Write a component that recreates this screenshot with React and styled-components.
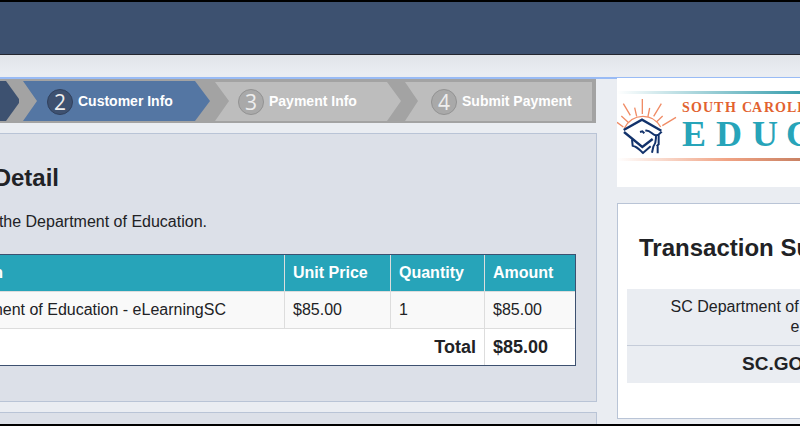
import React from "react";
import styled, { createGlobalStyle } from "styled-components";

const GlobalStyle = createGlobalStyle`
  * { box-sizing: border-box; }
  html, body { height: 100%; }
  body {
    margin: 0;
    background: #eaedf2;
    color: #212225;
    font-family: "Liberation Sans", Arial, sans-serif;
    font-size: 16px;
    line-height: 20px;
    overflow: hidden;
  }
  #root { height: 100%; }
`;

const Page = styled.div`
  height: 100vh;
  display: flex;
  flex-direction: column;
  overflow: hidden;
  border-top: 2px solid #000;
  border-bottom: 2px solid #000;
`;

const Header = styled.header`
  flex: 0 0 53px;
  background: #3d5170;
  border-bottom: 1px solid #24262f;
`;

const Body = styled.div`
  flex: 1;
  min-height: 0;
  padding-top: 22px;
  background: linear-gradient(#e1e4e9, #eaedf2 18px);
`;

const Main = styled.main`
  display: grid;
  grid-template-columns: minmax(0, 1fr) 183px;
  column-gap: 20px;
  border-top: 1px solid #99bbf5;
`;

const Column = styled.div`
  min-width: 0;
`;

const Accent = styled.div`
  height: 1px;
  margin-right: -20px;
  background: #99bbf5;
`;

const Steps = styled.ol`
  display: grid;
  grid-template-columns: 19px repeat(3, minmax(0, 1fr));
  column-gap: 4px;
  height: 44px;
  margin: 0 1px 10px 0;
  padding: 2px 4px 2px 0;
  list-style: none;
  background: #a3a3a3;
`;

const shapes = {
  done: "polygon(0 0, 6px 0, 100% 45%, 100% 55%, 6px 100%, 0 100%)",
  current: "polygon(0 0, calc(100% - 15px) 0, 100% 50%, calc(100% - 15px) 100%, 0 100%, 14px 50%)",
  next: "polygon(1px 1px, calc(100% - 14px) 1px, 100% 50%, calc(100% - 14px) 100%, 1px 100%, 15px 50%)",
  last: "polygon(0 1px, 100% 1px, 100% 100%, 0 100%, 13px 50%)",
};

const fills = { done: "#3d5170", current: "#5476a3", next: "#bdbdbd", last: "#bdbdbd" };

const insets = { done: 0, current: 24, next: 24, last: 26 };

const Step = styled.li`
  display: flex;
  align-items: center;
  gap: 5px;
  padding-left: ${(p) => insets[p.$kind]}px;
  overflow: hidden;
  color: #fff;
  font-size: 14px;
  font-weight: bold;
  white-space: nowrap;
  background: ${(p) => fills[p.$kind]};
  clip-path: ${(p) => shapes[p.$kind]};
`;

const StepNumber = styled.span`
  flex: none;
  width: 26px;
  height: 26px;
  margin-top: 2px;
  border: 1px solid ${(p) => (p.$active ? "#31415d" : "#929292")};
  border-radius: 50%;
  background: ${(p) => (p.$active ? "#3e5170" : "#a9a9a9")};
  color: #eee;
  font: 21px/25px "Open Sans", sans-serif;
  text-align: center;
`;

const Panel = styled.section`
  margin-bottom: 10px;
  padding: 32px 20px 35px 0;
  border: 1px solid #b9c4d6;
  border-left: 0;
  background: #dce0e8;
`;

const Title = styled.h2`
  margin: 0;
  font-size: 24px;
  line-height: 24px;
  white-space: nowrap;
`;

/* Text that runs out past the left edge of the window and ends at a set width. */
const Tail = styled.span`
  display: flex;
  justify-content: flex-end;
  width: ${(p) => p.$width}px;
  white-space: nowrap;
`;

const Intro = styled.p`
  margin: 22px 0;
`;

const Table = styled.table`
  width: 100%;
  table-layout: fixed;
  border-collapse: separate;
  border-spacing: 0;
  border: 1px solid #3d5170;
  border-left: 0;
`;

const Col = styled.col`
  width: ${(p) => p.$width};
`;

const Row = styled.tr`
  background: ${(p) => p.$fill};
  color: ${(p) => p.$ink || "inherit"};
  font-size: ${(p) => (p.$large ? 18 : 16)}px;
  font-weight: ${(p) => (p.$large ? "bold" : "normal")};
  & > * {
    height: ${(p) => (p.$large ? 36 : 37)}px;
    padding: 0 8px;
    text-align: left;
    border-right: 1px solid #ddd;
    border-bottom: ${(p) => (p.$large ? 0 : "1px solid #ddd")};
  }
  & > :first-child { padding-left: 0; }
  & > :last-child { border-right: 0; }
  & > th[scope="row"] { text-align: right; }
`;

const LogoCard = styled.div`
  height: 109px;
  margin-bottom: 16px;
  overflow: hidden;
  background: #fff;
`;

const Logo = styled.svg`
  display: block;
  width: 183px;
  height: 109px;
`;

const Summary = styled.aside`
  width: 300px;
  padding: 32px 9px 35px 9px;
  border: 1px solid #b9c4d6;
  background: #fff;
`;

const SummaryTitle = styled(Title)`
  margin: 0 0 29px 12px;
`;

const SummaryList = styled.div`
  background: #eaedf2;
`;

const SummaryRow = styled.div`
  padding: ${(p) => (p.$total ? "8px 13px 9px 115px" : "8px 23px 8px 8px")};
  text-align: ${(p) => (p.$total ? "left" : "right")};
  border-top: ${(p) => (p.$total ? "1px solid #c5ccd9" : 0)};
  font-size: ${(p) => (p.$total ? 19 : 16)}px;
  font-weight: ${(p) => (p.$total ? "bold" : "normal")};
`;

function EducationLogo() {
  return (
    <Logo viewBox="0 0 183 109" role="img" aria-label="South Carolina Education">
      <defs>
        <linearGradient id="teal">
          <stop offset="0" stopColor="#fff" />
          <stop offset="1" stopColor="#3a9fae" />
        </linearGradient>
        <linearGradient id="orange">
          <stop offset="0" stopColor="#fff" />
          <stop offset=".6" stopColor="#f0a384" />
          <stop offset="1" stopColor="#c98264" />
        </linearGradient>
      </defs>
      <rect y="13" width="183" height="3" fill="url(#teal)" />
      <rect y="80" width="183" height="3" fill="url(#orange)" />
      <g transform="translate(-1 16) scale(.3333)" fill="none">
        <path
          d="M79 15V60 M56 41L62 67 M101 42L96 67 M22 29L43 64 M136 29L113 67 M16 66L38 86 M140 66L122 83 M3 85L22 99 M180 70L139 95 M25 103C50 56 109 56 134 99"
          stroke="#f08c66"
          strokeWidth="4"
        />
        <path
          d="M23 108L78 77L136 110 M24 114L79 159L110 135"
          stroke="#12326b"
          strokeWidth="7"
        />
        <path
          d="M48 136L50 155C65 158 73 170 81 177L104 157 M72 114L79 112L85 118 M88 110C103 108 107 121 119 124C128 125 132 119 137 113 M120 126C119 138 122 145 112 158L108 176 M128 121V151L122 157 M125 157V178"
          stroke="#12326b"
          strokeWidth="6"
        />
      </g>
      <g fontFamily="Liberation Serif, serif" fontWeight="bold">
        <text x="65 74 86 97 108 125 135 147 158 170 180" y="34" fontSize="14" fill="#e2622f">SOUTHCAROLI</text>
        <text x="65 99 135 169" y="68" fontSize="36" fill="#27a4b9">EDUC</text>
      </g>
    </Logo>
  );
}

export default function App() {
  return (
    <>
      <GlobalStyle />
      <Page>
        <Header />
        <Body>
          <Main>
            <Column>
              <Accent />
              <Steps>
                <Step $kind="done" />
                <Step $kind="current" aria-current="step">
                  <StepNumber $active>2</StepNumber>Customer Info
                </Step>
                <Step $kind="next"><StepNumber>3</StepNumber>Payment Info</Step>
                <Step $kind="last"><StepNumber>4</StepNumber>Submit Payment</Step>
              </Steps>
              <Panel>
                <Title><Tail $width={59}>Detail</Tail></Title>
                <Intro><Tail $width={207}>the Department of Education.</Tail></Intro>
                <Table>
                  <colgroup>
                    <Col $width="auto" />
                    <Col $width="106px" />
                    <Col $width="94px" />
                    <Col $width="90px" />
                  </colgroup>
                  <thead>
                    <Row $fill="#27a4b9" $ink="#fff">
                      <th scope="col"><Tail $width={3}>n</Tail></th>
                      <th scope="col">Unit Price</th>
                      <th scope="col">Quantity</th>
                      <th scope="col">Amount</th>
                    </Row>
                  </thead>
                  <tbody>
                    <Row $fill="#f9f9f9">
                      <td><Tail $width={226}>ment of Education - eLearningSC</Tail></td>
                      <td>$85.00</td>
                      <td>1</td>
                      <td>$85.00</td>
                    </Row>
                    <Row $fill="#fff" $large>
                      <th scope="row" colSpan={3}>Total</th>
                      <td>$85.00</td>
                    </Row>
                  </tbody>
                </Table>
              </Panel>
              <Panel />
            </Column>
            <Column>
              <LogoCard><EducationLogo /></LogoCard>
              <Summary>
                <SummaryTitle>Transaction Summary</SummaryTitle>
                <SummaryList>
                  <SummaryRow>SC Department of Education - eLearningSC</SummaryRow>
                  <SummaryRow $total>SC.GOV</SummaryRow>
                </SummaryList>
              </Summary>
            </Column>
          </Main>
        </Body>
      </Page>
    </>
  );
}
